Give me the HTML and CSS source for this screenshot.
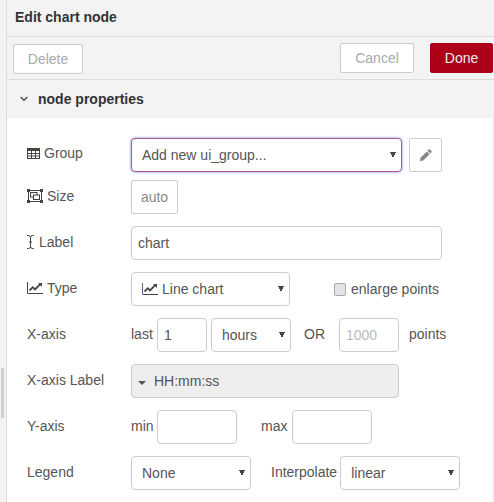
FILE: index.html
```html
<!DOCTYPE html>
<html lang="en">
<head>
    <meta charset="UTF-8">
    <meta name="viewport" content="width=device-width, initial-scale=1.0">
    <title>Edit chart node</title>
    <link rel="stylesheet" href="styles.css">
</head>
<body>
    <div class="gutter"><div class="gutter-thumb"></div></div>
    <div class="tray">
        <header class="tray-title">Edit chart node</header>
        <div class="tray-toolbar">
            <button class="btn btn-delete">Delete</button>
            <button class="btn btn-cancel">Cancel</button>
            <button class="btn btn-done">Done</button>
        </div>
        <div class="section-header">
            <svg class="chevron" width="8" height="6" viewBox="0 0 8 6"><path d="M.7 1l3.3 3.4L7.3 1" fill="none" stroke="#444" stroke-width="1.3"/></svg>
            node properties
        </div>
        <div class="form">
            <div class="row row-group">
                <label class="row-label label-group">
                    <svg class="icon" width="13" height="11" viewBox="0 0 13 11"><path fill="#444" fill-rule="evenodd" d="M0 0h13v11H0zM1 3v2h3V3zm4 0v2h3V3zm4 0v2h3V3zM1 6v1.5h3V6zm4 0v1.5h3V6zm4 0v1.5h3V6zM1 8.500V10h3V8.500zm4 0V10h3V8.500zm4 0V10h3V8.500z"/></svg>
                    Group
                </label>
                <select class="field dropdown select-focus w-271"><option>Add new ui_group...</option></select>
                <button class="square-btn pencil-btn">
                    <svg width="12" height="12" viewBox="0 0 12 12"><path fill="#888" d="M8.600.6a1 1 0 0 1 1.400 0l1.400 1.400a1 1 0 0 1 0 1.400l-1.200 1.200-2.800-2.800zM6.800 2.400l2.800 2.800L3.300 11.500.3 12a.3.3 0 0 1-.3-.3l.5-3z"/></svg>
                </button>
            </div>
            <div class="row row-size">
                <label class="row-label">
                    <svg class="icon" width="16" height="14" viewBox="0 0 16 14"><g fill="none" stroke="#444"><rect x="1.500" y="1.500" width="13" height="11"/><rect x="3.500" y="3.500" width="6.500" height="4.500"/><rect x="6.500" y="6" width="6" height="4.500" fill="#fff"/></g><path fill="#444" d="M0 0h3v3H0zM13 0h3v3h-3zM0 11h3v3H0zM13 11h3v3h-3z"/></svg>
                    Size
                </label>
                <button class="square-btn size-btn">auto</button>
            </div>
            <div class="row">
                <label class="row-label">
                    <svg class="icon icon-cursor" width="7" height="14" viewBox="0 0 7 14"><path fill="none" stroke="#444" d="M0 .5h1.500q2 0 2 2v9q0 2-2 2H0M7 .5H5.500q-2 0-2 2v9q0 2 2 2H7M2 7h3"/></svg>
                    Label
                </label>
                <input class="field w-311" type="text" value="chart">
            </div>
            <div class="row">
                <label class="row-label">
                    <svg class="icon" width="16" height="12" viewBox="0 0 16 12"><path fill="none" stroke="#444" d="M.5 0v11.500H16"/><path fill="none" stroke="#444" stroke-width="1.800" d="M2.500 8.500l3.300-3.300 2.200 2.200 5-5"/><path fill="#444" d="M11 1h4v4z"/></svg>
                    Type
                </label>
                <div class="type-select dropdown">
                    <svg class="icon" width="16" height="12" viewBox="0 0 16 12"><path fill="none" stroke="#6d5a8c" d="M.5 0v11.500"/><path fill="none" stroke="#444" d="M1 11.500h15"/><path fill="none" stroke="#444" stroke-width="1.800" d="M2.500 8.500l3.300-3.300 2.200 2.200 5-5"/><path fill="#444" d="M11 1h4v4z"/></svg>
                    Line chart
                </div>
                <span class="enlarge"><span class="checkbox"></span>enlarge points</span>
            </div>
            <div class="row">
                <label class="row-label">X-axis</label>
                <span class="word word-last">last</span>
                <input class="field w-50" type="text" value="1">
                <select class="field dropdown w-80 gap-left-4"><option>hours</option></select>
                <span class="word word-or">OR</span>
                <input class="field w-60" type="text" placeholder="1000">
                <span class="word word-points">points</span>
            </div>
            <div class="row">
                <label class="row-label">X-axis Label</label>
                <div class="typed-input">
                    <span class="caret"></span>
                    HH:mm:ss
                </div>
            </div>
            <div class="row">
                <label class="row-label">Y-axis</label>
                <span class="word word-min">min</span>
                <input class="field w-80" type="text">
                <span class="word word-max">max</span>
                <input class="field w-80" type="text">
            </div>
            <div class="row">
                <label class="row-label">Legend</label>
                <select class="field dropdown w-120"><option>None</option></select>
                <span class="word word-interp">Interpolate</span>
                <select class="field dropdown w-120"><option>linear</option></select>
            </div>
        </div>
    </div>
</body>
</html>
```

FILE: styles.css
```css
* {
    box-sizing: border-box;
}

html,
body {
    height: 100%;
}

body {
    margin: 0;
    display: flex;
    overflow: hidden;
    background-color: #f3f3f3;
    font-family: "Liberation Sans", Arial, sans-serif;
    font-size: 14px;
    color: #555;
}

.gutter {
    width: 6px;
    padding-top: 368px;
    padding-left: 1px;
    flex-shrink: 0;
}

.gutter-thumb {
    width: 3px;
    height: 50px;
    background-color: #d0d0d0;
}

.tray {
    flex: 1;
    border-left: 1px solid #ddd;
    display: flex;
    flex-direction: column;
}

.tray-title {
    height: 37px;
    line-height: 35px;
    padding-left: 8px;
    font-weight: bold;
    color: #333;
    border-bottom: 1px solid #ddd;
}

.tray-toolbar {
    height: 43px;
    padding: 6px 0 0 6px;
    display: flex;
    align-items: flex-start;
    border-bottom: 1px solid #ddd;
}

.btn {
    height: 30px;
    padding: 0;
    font-family: inherit;
    font-size: 14px;
    background-color: #fff;
    color: #aaa;
    border: 1px solid #ccc;
    border-radius: 2px;
}

.btn-delete {
    width: 70px;
    margin-top: 1px;
    margin-right: auto;
}

.btn-cancel {
    width: 74px;
    margin-right: 16px;
}

.btn-done {
    width: 63px;
    margin-right: 1px;
    background-color: #ad0019;
    border-color: #ad0019;
    color: #eee;
}

.section-header {
    height: 38px;
    line-height: 38px;
    padding-left: 13px;
    font-weight: bold;
    color: #333;
    display: flex;
    align-items: center;
}

.chevron {
    margin-right: 10px;
}

.form {
    flex: 1;
    width: 485px;
    background-color: #fff;
    padding: 20px 0 0 20px;
}

.row {
    display: flex;
    align-items: center;
    height: 34px;
    margin-bottom: 12px;
}

.row-group {
    margin-bottom: 8px;
}

.row-label {
    width: 104px;
    flex-shrink: 0;
    padding-bottom: 2px;
    display: flex;
    align-items: center;
}

.label-group {
    padding-bottom: 4px;
}

.icon {
    margin-right: 4px;
    flex-shrink: 0;
}

.icon-cursor {
    margin-right: 5px;
}

.field {
    height: 34px;
    padding: 0 6px;
    font-family: inherit;
    font-size: 14px;
    color: #555;
    background-color: #fff;
    border: 1px solid #ccc;
    border-radius: 4px;
}

.field::placeholder {
    color: #bbb;
}

select.field {
    appearance: none;
    padding: 0 20px 0 10px;
}

/* little down arrow made of two corner gradients */
.dropdown {
    background-image: linear-gradient(to bottom left, #444 50%, transparent 50%), linear-gradient(to bottom right, #444 50%, transparent 50%);
    background-size: 3px 6px;
    background-position: right 8px center, right 5px center;
    background-repeat: no-repeat;
}

.select-focus {
    border-color: #ad5a8c;
    box-shadow: 0 0 2px 1px #b7c9f0;
}

.w-50 { width: 50px; }
.w-60 { width: 60px; }
.w-80 { width: 80px; }
.w-120 { width: 120px; }
.w-271 { width: 271px; }
.w-311 { width: 311px; }

.gap-left-4 {
    margin-left: 4px;
}

.square-btn {
    height: 34px;
    padding: 0;
    font-family: inherit;
    font-size: 14px;
    background-color: #fff;
    border: 1px solid #ccc;
    border-radius: 2px;
}

.pencil-btn {
    width: 33px;
    margin-left: 7px;
    display: flex;
    align-items: center;
    justify-content: center;
}

.size-btn {
    width: 47px;
    color: #888;
}

.type-select {
    width: 159px;
    height: 34px;
    padding: 0 0 0 10px;
    display: flex;
    align-items: center;
    border: 1px solid #ccc;
    border-radius: 4px;
}

.enlarge {
    margin-left: 44px;
    display: flex;
    align-items: center;
}

.checkbox {
    width: 12px;
    height: 13px;
    margin-right: 5px;
    background-color: #e4e4e4;
    border: 1px solid #aaa;
    border-radius: 2px;
}

.word {
    padding-bottom: 2px;
}

.word-last,
.word-min {
    width: 26px;
}

.word-or {
    margin: 0 14px 0 13px;
}

.word-points {
    margin-left: 10px;
}

.word-max {
    margin: 0 5px 0 24px;
}

.word-interp {
    margin: 0 3px 0 20px;
}

.typed-input {
    width: 268px;
    height: 34px;
    padding-left: 6px;
    display: flex;
    align-items: center;
    background-color: #eee;
    border: 1px solid #ccc;
    border-radius: 4px;
}

.caret {
    margin-right: 8px;
    margin-top: 3px;
    border-left: 4px solid transparent;
    border-right: 4px solid transparent;
    border-top: 4px solid #555;
}
```
